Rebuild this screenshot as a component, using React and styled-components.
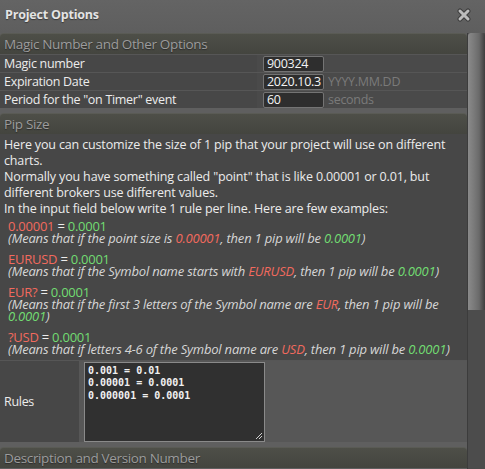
import styled, { createGlobalStyle } from "styled-components";

const GlobalStyle = createGlobalStyle`
  html, body {
    margin: 0;
    padding: 0;
    background: #5f5f5f;
    overflow: hidden;
  }
  body {
    font-family: "Open Sans", "Noto Sans", sans-serif;
  }
`;

const Window = styled.div`
  width: 485px;
  height: 469px;
  display: flex;
  flex-direction: column;
  background: #5f5f5f;
  overflow: hidden;
`;

const TitleBar = styled.div`
  height: 33px;
  display: flex;
  align-items: center;
  justify-content: space-between;
  padding: 0 14px 5px 5px;
  box-sizing: border-box;
  background: linear-gradient(#646464, #5e5e5e);
`;

const Title = styled.div`
  font-size: 12.5px;
  font-weight: 700;
  color: #e4e4e4;
  text-shadow: 0 1px 1px #3a3a3a;
  letter-spacing: -0.2px;
`;

const Close = styled.svg`
  width: 14px;
  height: 14px;
  margin-top: 1px;
`;

const Body = styled.div`
  flex: 1;
  display: flex;
  min-height: 0;
`;

const Panels = styled.div`
  width: 467px;
  display: flex;
  flex-direction: column;
  gap: 5px;
  overflow: hidden;
`;

const Section = styled.div`
  display: flex;
  flex-direction: column;
  flex-shrink: 0;
`;

const SectionHeader = styled.div`
  height: 21px;
  line-height: 21px;
  padding-left: 4px;
  border-radius: 4px 4px 0 0;
  border-top: 1px solid #5a5b55;
  box-sizing: border-box;
  background: linear-gradient(#4e4f48, #44453f);
  color: #9c9c9c;
  font-size: 13.5px;
  letter-spacing: -0.35px;
  text-shadow: 0 1px 1px #2c2c2c;
`;

const OptionRow = styled.div`
  display: grid;
  grid-template-columns: ${(p) => p.$label}px 1fr;
  border-top: 1px solid #565656;
`;

const LabelCell = styled.div`
  background: #474747;
  color: #ececec;
  font-size: 12.5px;
  letter-spacing: -0.3px;
  padding-left: 4px;
  display: flex;
  align-items: center;
  height: ${(p) => (p.$tall ? "81px" : "17px")};
`;

const ValueCell = styled.div`
  background: ${(p) => (p.$light ? "#575757" : "#4a4a4a")};
  display: flex;
  align-items: center;
  gap: 4px;
  padding-left: ${(p) => (p.$light ? "5px" : "6px")};
`;

const TextInput = styled.div`
  width: 61px;
  height: 16px;
  box-sizing: border-box;
  border: 1px solid #747474;
  border-radius: 2px;
  background: #2e2e2e;
  color: #f4f4f4;
  font-size: 12.5px;
  line-height: 14px;
  padding-left: 3px;
  letter-spacing: -0.3px;
  white-space: nowrap;
  overflow: hidden;
`;

const Hint = styled.span`
  color: #7a7a7a;
  font-size: 12.5px;
  letter-spacing: -0.3px;
`;

const Info = styled.div`
  background: #474747;
  padding: 3px 4px 5px 4px;
  color: #ececec;
  font-size: 12.5px;
  line-height: 16px;
  letter-spacing: -0.15px;
`;

const Examples = styled.div`
  padding: 3px 0 0 4px;
`;

const Example = styled.div`
  margin-bottom: 9px;
  font-size: 13px;
  line-height: 12px;
  letter-spacing: -0.25px;
  &:last-child {
    margin-bottom: 0;
  }
`;

const Note = styled.div`
  font-style: italic;
  color: #d6d6d6;
  letter-spacing: -0.2px;
`;

const Red = styled.span`
  color: #f26a5e;
`;

const Green = styled.span`
  color: #72dd72;
`;

const Rules = styled.div`
  width: 181px;
  height: 80px;
  box-sizing: border-box;
  border: 1px solid #8a8a8a;
  background: #303030;
  color: #f0f0f0;
  font-family: "DejaVu Sans Mono", monospace;
  font-size: 10px;
  font-weight: 700;
  line-height: 12.7px;
  padding: 2px 3px;
  white-space: pre;
  position: relative;
`;

const Grip = styled.svg`
  position: absolute;
  right: 1px;
  bottom: 1px;
  width: 8px;
  height: 8px;
`;

const Scrollbar = styled.div`
  width: 18px;
  background: #4c4c4c;
  border-left: 1px solid #3c3c3c;
  box-sizing: border-box;
  display: flex;
  flex-direction: column;
`;

const Thumb = styled.div`
  height: 277px;
  background: linear-gradient(90deg, #8a8a8a 0%, #7a7a7a 35%, #6a6a6a 65%, #3e3e3e 100%);
  border-radius: 3px 3px 0 0;
`;

const examples = [
  { rule: ["0.00001", "0.0001"], note: ["the point size is ", "0.00001"] },
  { rule: ["EURUSD", "0.0001"], note: ["the Symbol name starts with ", "EURUSD"] },
  { rule: ["EUR?", "0.0001"], note: ["the first 3 letters of the Symbol name are ", "EUR"] },
  { rule: ["?USD", "0.0001"], note: ["letters 4-6 of the Symbol name are ", "USD"] },
];

export default function App() {
  return (
    <Window>
      <GlobalStyle />
      <TitleBar>
        <Title>Project Options</Title>
        <Close viewBox="0 0 14 14">
          <path d="M3 3 L11 11 M11 3 L3 11" stroke="#3e3e3e" strokeWidth="5" strokeLinecap="round" />
          <path d="M3 3 L11 11 M11 3 L3 11" stroke="#bdbdbd" strokeWidth="3" strokeLinecap="round" />
        </Close>
      </TitleBar>
      <Body>
        <Panels>
          <Section>
            <SectionHeader>Magic Number and Other Options</SectionHeader>
            <OptionRow $label={257}>
              <LabelCell>Magic number</LabelCell>
              <ValueCell>
                <TextInput>900324</TextInput>
              </ValueCell>
            </OptionRow>
            <OptionRow $label={257}>
              <LabelCell>Expiration Date</LabelCell>
              <ValueCell>
                <TextInput>2020.10.3</TextInput>
                <Hint>YYYY.MM.DD</Hint>
              </ValueCell>
            </OptionRow>
            <OptionRow $label={257}>
              <LabelCell>Period for the "on Timer" event</LabelCell>
              <ValueCell>
                <TextInput>60</TextInput>
                <Hint>seconds</Hint>
              </ValueCell>
            </OptionRow>
          </Section>

          <Section>
            <SectionHeader>Pip Size</SectionHeader>
            <Info>
              Here you can customize the size of 1 pip that your project will use on different
              charts.
              <br />
              Normally you have something called "point" that is like 0.00001 or 0.01, but
              different brokers use different values.
              <br />
              In the input field below write 1 rule per line. Here are few examples:
              <Examples>
                {examples.map((ex, i) => (
                  <Example key={i}>
                    <div>
                      <Red>{ex.rule[0]}</Red> = <Green>{ex.rule[1]}</Green>
                    </div>
                    <Note>
                      (Means that if {ex.note[0]}
                      <Red>{ex.note[1]}</Red>, then 1 pip will be <Green>0.0001</Green>)
                    </Note>
                  </Example>
                ))}
              </Examples>
            </Info>
            <OptionRow $label={79}>
              <LabelCell $tall>Rules</LabelCell>
              <ValueCell $light>
                <Rules>
                  {"0.001 = 0.01\n0.00001 = 0.0001\n0.000001 = 0.0001"}
                  <Grip viewBox="0 0 8 8">
                    <path d="M7 1 L1 7 M7 4 L4 7" stroke="#cfcfcf" strokeWidth="1" />
                  </Grip>
                </Rules>
              </ValueCell>
            </OptionRow>
          </Section>

          <Section>
            <SectionHeader>Description and Version Number</SectionHeader>
          </Section>
        </Panels>
        <Scrollbar>
          <Thumb />
        </Scrollbar>
      </Body>
    </Window>
  );
}
